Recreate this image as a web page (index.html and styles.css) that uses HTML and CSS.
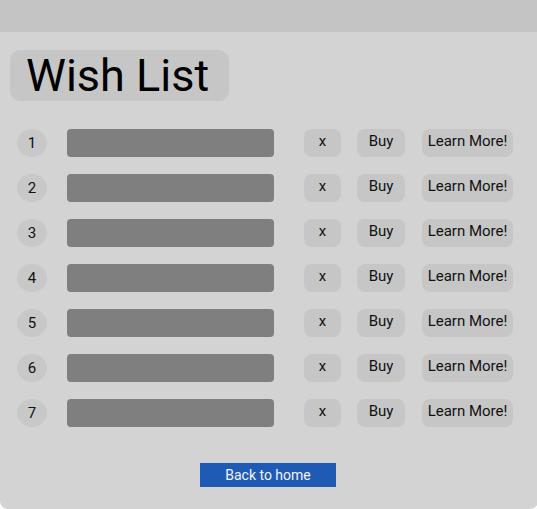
FILE: index.html
```html
<!DOCTYPE html>
<html>
<head>
<meta charset="utf-8">
<link rel="stylesheet" href="styles.css">
</head>
<body>
<div class="topbar"></div>
<main class="panel">
  <h1 class="title">Wish List</h1>
  <div class="list">
    <div class="row"><span class="num">1</span><span class="bar"></span><button class="btn btn-x">x</button><button class="btn btn-buy">Buy</button><button class="btn btn-learn">Learn More!</button></div>
    <div class="row"><span class="num">2</span><span class="bar"></span><button class="btn btn-x">x</button><button class="btn btn-buy">Buy</button><button class="btn btn-learn">Learn More!</button></div>
    <div class="row"><span class="num">3</span><span class="bar"></span><button class="btn btn-x">x</button><button class="btn btn-buy">Buy</button><button class="btn btn-learn">Learn More!</button></div>
    <div class="row"><span class="num">4</span><span class="bar"></span><button class="btn btn-x">x</button><button class="btn btn-buy">Buy</button><button class="btn btn-learn">Learn More!</button></div>
    <div class="row"><span class="num">5</span><span class="bar"></span><button class="btn btn-x">x</button><button class="btn btn-buy">Buy</button><button class="btn btn-learn">Learn More!</button></div>
    <div class="row"><span class="num">6</span><span class="bar"></span><button class="btn btn-x">x</button><button class="btn btn-buy">Buy</button><button class="btn btn-learn">Learn More!</button></div>
    <div class="row"><span class="num">7</span><span class="bar"></span><button class="btn btn-x">x</button><button class="btn btn-buy">Buy</button><button class="btn btn-learn">Learn More!</button></div>
  </div>
  <div class="footer"><button class="home">Back to home</button></div>
</main>
</body>
</html>
```
FILE: styles.css
```css
html, body {
  margin: 0;
  padding: 0;
  background: #ffffff;
  font-family: Roboto, "Liberation Sans", sans-serif;
}
.topbar {
  height: 32px;
  background: #c4c4c4;
}
.panel {
  height: 477px;
  box-sizing: border-box;
  background: #d3d3d3;
  border-radius: 0 0 8px 8px;
  padding: 18px 0 0 10px;
  margin-right: -1px;
}
.title {
  margin: 0;
  width: 219px;
  height: 51px;
  box-sizing: border-box;
  background: #c6c6c6;
  border-radius: 10px;
  font-weight: 400;
  font-size: 45px;
  line-height: 51px;
  padding-left: 16px;
  color: #000;
}
.list {
  margin-top: 28px;
  display: flex;
  flex-direction: column;
  gap: 17px;
}
.row {
  display: flex;
  align-items: center;
  height: 28px;
  padding-left: 7px;
}
.num {
  width: 30px;
  height: 28px;
  border-radius: 50%;
  background: #c8c8c8;
  display: flex;
  align-items: center;
  justify-content: center;
  font-size: 15px;
  color: #111;
}
.bar {
  margin-left: 20px;
  width: 207px;
  height: 28px;
  border-radius: 4px;
  background: #807f7f;
}
.btn {
  height: 28px;
  border: none;
  border-radius: 8px;
  background: #c6c6c6;
  font-family: Roboto, "Liberation Sans", sans-serif;
  font-size: 15px;
  color: #111;
  padding: 0 0 4px;
}
.btn-x { margin-left: 30px; width: 37px; }
.btn-buy { margin-left: 16px; width: 48px; }
.btn-learn { margin-left: 17px; width: 91px; }
.footer {
  margin-top: 36px;
  display: flex;
  justify-content: center;
}
.home {
  width: 136px;
  height: 24px;
  border: none;
  border-radius: 0;
  background: #1f5bb5;
  color: #f2f4fa;
  font-family: Roboto, "Liberation Sans", sans-serif;
  font-size: 14px;
  padding: 0;
  margin-left: -12px;
}
```
